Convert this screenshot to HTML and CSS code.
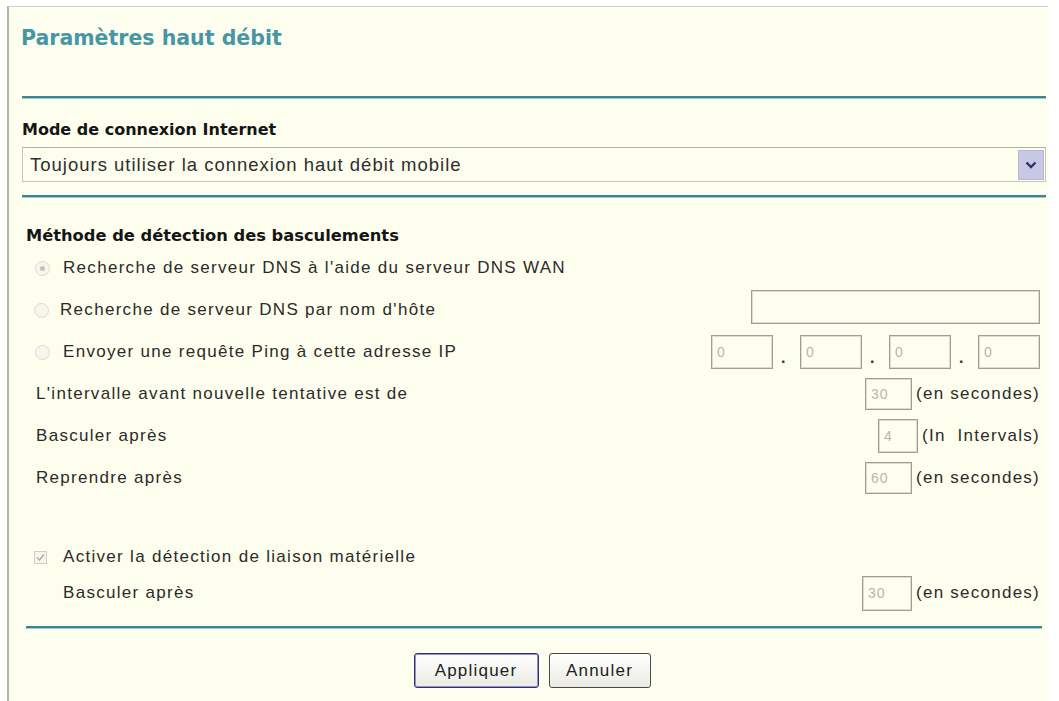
FILE: index.html
```html
<!DOCTYPE html>
<html lang="fr">
<head>
<meta charset="utf-8">
<title>Paramètres haut débit</title>
<link rel="stylesheet" href="styles.css">
</head>
<body>
<div class="frame">
  <div class="content">
    <h1 class="title">Paramètres haut débit</h1>
    <div class="rule rule-first"></div>

    <div class="label-bold">Mode de connexion Internet</div>
    <div class="select">
      <span class="select-text">Toujours utiliser la connexion haut débit mobile</span>
      <span class="select-btn">
        <svg width="12" height="8" viewBox="0 0 12 8"><polyline points="1.5,1.5 6,6 10.5,1.5" fill="none" stroke="#2c3470" stroke-width="2.4"/></svg>
      </span>
    </div>
    <div class="rule rule-second"></div>

    <div class="section-head">Méthode de détection des basculements</div>

    <div class="rows">
      <div class="row">
        <span class="radio checked"></span>
        <span class="txt">Recherche de serveur DNS à l'aide du serveur DNS WAN</span>
      </div>
      <div class="row">
        <span class="radio radio-alt"></span>
        <span class="txt">Recherche de serveur DNS par nom d'hôte</span>
        <span class="right"><span class="field field-host"></span></span>
      </div>
      <div class="row">
        <span class="radio"></span>
        <span class="txt">Envoyer une requête Ping à cette adresse IP</span>
        <span class="right">
          <span class="field field-ip">0</span><span class="dot">.</span><span class="field field-ip">0</span><span class="dot">.</span><span class="field field-ip">0</span><span class="dot">.</span><span class="field field-ip">0</span>
        </span>
      </div>
      <div class="row row-plain">
        <span class="txt">L'intervalle avant nouvelle tentative est de</span>
        <span class="right"><span class="field field-num">30</span><span class="unit">(en secondes)</span></span>
      </div>
      <div class="row row-plain">
        <span class="txt">Basculer après</span>
        <span class="right"><span class="field field-small">4</span><span class="unit">(In&nbsp; Intervals)</span></span>
      </div>
      <div class="row row-plain">
        <span class="txt">Reprendre après</span>
        <span class="right"><span class="field field-num">60</span><span class="unit">(en secondes)</span></span>
      </div>

      <div class="row row-check">
        <span class="checkbox">
          <svg width="11" height="11" viewBox="0 0 11 11"><polyline points="2,5.5 4.5,8 9,2.5" fill="none" stroke="#aeaea6" stroke-width="1.5"/></svg>
        </span>
        <span class="txt">Activer la détection de liaison matérielle</span>
      </div>
      <div class="row row-sub">
        <span class="txt">Basculer après</span>
        <span class="right"><span class="field field-num field-wide">30</span><span class="unit">(en secondes)</span></span>
      </div>
    </div>

    <div class="rule rule-last"></div>

    <div class="buttons">
      <button class="btn btn-primary" type="button">Appliquer</button>
      <button class="btn btn-cancel" type="button">Annuler</button>
    </div>
  </div>
</div>
</body>
</html>
```

FILE: styles.css
```css
html, body {
  margin: 0;
  padding: 0;
  background: #ffffff;
  overflow: hidden;
}

.frame {
  margin: 6px 0 0 7px;
  width: 1041px;
  height: 695px;
  box-sizing: border-box;
  border-top: 1px solid #d2d2ca;
  border-left: 2px solid #b3b3ab;
  background: #fefeee;
  padding: 19px 2px 0 13px;
}

.content {
  display: flex;
  flex-direction: column;
}

.title {
  margin: 0 0 0 -1px;
  font: bold 20.5px/24px "DejaVu Sans", sans-serif;
  color: #4597a7;
}

.rule {
  height: 2px;
  background: #3b8791;
  border-bottom: 1px solid #9fcbd0;
}

.rule-first { margin-top: 46px; }
.rule-second { margin-top: 13px; }
.rule-last { margin: 15px 4px 0 4px; }

.label-bold {
  margin-top: 21px;
  font: bold 16px/20px "DejaVu Sans", sans-serif;
  color: #151515;
}

.select {
  margin-top: 7px;
  height: 35px;
  box-sizing: border-box;
  border: 1px solid #c4c4bc;
  border-top-color: #aeaea8;
  display: flex;
  align-items: center;
  padding: 0 1px 0 7px;
}

.select-text {
  flex: 1;
  font: 18.5px/22px "Liberation Sans", Arial, sans-serif;
  letter-spacing: 1px;
  color: #2e2e2e;
}

.select-btn {
  width: 26px;
  height: 30px;
  box-sizing: border-box;
  background: #c6c8e4;
  border: 1px solid #b6b8da;
  display: flex;
  align-items: center;
  justify-content: center;
}

.section-head {
  margin-top: 28px;
  padding-left: 4px;
  font: bold 16.3px/20px "DejaVu Sans", sans-serif;
  color: #151515;
}

.rows {
  padding: 1px 6px 0 0;
  display: flex;
  flex-direction: column;
}

.row {
  height: 42px;
  display: flex;
  align-items: center;
}

.txt {
  font: 17px/20px "Liberation Sans", Arial, sans-serif;
  letter-spacing: 1.3px;
  color: #2b2b2b;
  white-space: nowrap;
}

.right {
  margin-left: auto;
  display: flex;
  align-items: center;
}

.radio {
  width: 15px;
  height: 15px;
  box-sizing: border-box;
  border-radius: 50%;
  border: 1px solid #dcdcd2;
  background: #f6f6ec;
  margin: 0 13px 0 13px;
  display: flex;
  align-items: center;
  justify-content: center;
}

.radio-alt { margin: 0 11px 0 12px; }

.radio.checked::after {
  content: "";
  width: 5px;
  height: 5px;
  border-radius: 50%;
  background: #c2c2ba;
}

.field {
  height: 34px;
  box-sizing: border-box;
  border: 1px solid #9e9e96;
  box-shadow: inset 0 0 0 1px #dcdcd2;
  background: #fefeee;
  font: 14px/32px "Liberation Sans", Arial, sans-serif;
  letter-spacing: 1px;
  color: #b6b6ae;
  padding-left: 5px;
  display: block;
}

.field-host { width: 289px; margin-top: -6px; }
.field-ip { width: 62px; }
.field-num { width: 47px; height: 32px; line-height: 30px; }
.field-wide { width: 50px; height: 35px; line-height: 33px; }
.field-small { width: 40px; }

.dot {
  width: 27px;
  height: 34px;
  display: flex;
  align-items: flex-end;
  justify-content: flex-start;
  padding: 0 0 4px 8px;
  box-sizing: border-box;
  font: bold 16px/14px "Liberation Sans", Arial, sans-serif;
  color: #333;
}

.unit {
  margin-left: 4px;
  font: 17px/20px "Liberation Sans", Arial, sans-serif;
  letter-spacing: 1.25px;
  color: #2b2b2b;
  white-space: nowrap;
}

.row-plain { padding-left: 14px; }

.row-check {
  height: 36px;
  margin-top: 40px;
}

.checkbox {
  width: 13px;
  height: 13px;
  box-sizing: border-box;
  border: 1px solid #cfcfc6;
  background: #f6f6ec;
  margin: 0 16px 0 12px;
  display: flex;
  align-items: center;
  justify-content: center;
}

.row-sub {
  height: 36px;
  padding-left: 41px;
}

.buttons {
  margin-top: 24px;
  padding-right: 4px;
  display: flex;
  justify-content: center;
  gap: 10px;
}

.btn {
  height: 35px;
  box-sizing: border-box;
  border-radius: 3px;
  background: linear-gradient(#ffffff, #ebebe3);
  font: 17px/20px "Liberation Sans", Arial, sans-serif;
  letter-spacing: 1.2px;
  color: #222;
  padding: 0;
}

.btn-primary {
  width: 125px;
  border: 1px solid #34345a;
  box-shadow: inset 0 0 0 1px #8e90d8;
}

.btn-cancel {
  width: 102px;
  border: 1px solid #4a4a4a;
}
```
